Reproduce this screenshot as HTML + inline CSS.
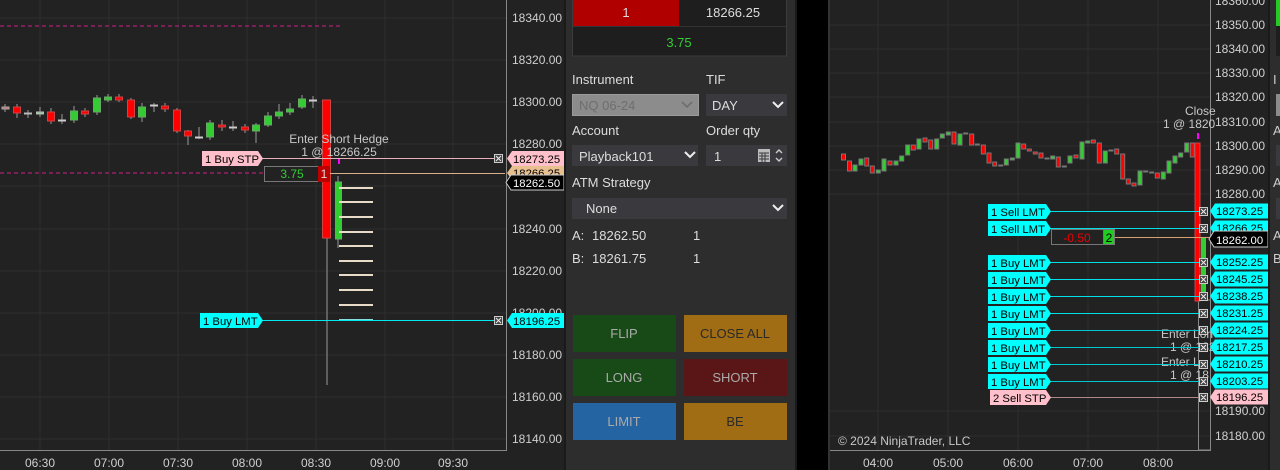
<!DOCTYPE html>
<html><head><meta charset="utf-8"><style>
html,body{margin:0;padding:0;background:#000;width:1280px;height:470px;overflow:hidden}
svg{display:block;font-family:"Liberation Sans",sans-serif}
.t{font-size:11.3px}
</style></head><body>
<svg width="1280" height="470" viewBox="0 0 1280 470" xmlns="http://www.w3.org/2000/svg">
<!-- LEFT CHART -->
<rect x="0" y="0" width="566" height="470" fill="#222"/>
<g stroke="#2e2e2e" stroke-width="1">
<line x1="0" y1="18" x2="506" y2="18"/><line x1="0" y1="60" x2="506" y2="60"/><line x1="0" y1="102" x2="506" y2="102"/><line x1="0" y1="144" x2="506" y2="144"/><line x1="0" y1="186" x2="506" y2="186"/><line x1="0" y1="229" x2="506" y2="229"/><line x1="0" y1="271" x2="506" y2="271"/><line x1="0" y1="313" x2="506" y2="313"/><line x1="0" y1="355" x2="506" y2="355"/><line x1="0" y1="397" x2="506" y2="397"/><line x1="0" y1="439" x2="506" y2="439"/>
<line x1="40" y1="0" x2="40" y2="450"/><line x1="109" y1="0" x2="109" y2="450"/><line x1="178" y1="0" x2="178" y2="450"/><line x1="247" y1="0" x2="247" y2="450"/><line x1="316" y1="0" x2="316" y2="450"/><line x1="385" y1="0" x2="385" y2="450"/><line x1="453" y1="0" x2="453" y2="450"/>
</g>
<line x1="0" y1="26" x2="343" y2="26" stroke="#d0208a" stroke-width="1" stroke-dasharray="4,3"/>
<line x1="0" y1="173" x2="265" y2="173" stroke="#d0208a" stroke-width="1" stroke-dasharray="4,3"/>
<line x1="506.5" y1="0" x2="506.5" y2="450" stroke="#888"/>
<line x1="0" y1="450.5" x2="507" y2="450.5" stroke="#888"/>
<g fill="#d0d0d0" font-size="12">
<text x="512" y="22">18340.00</text><text x="512" y="64">18320.00</text><text x="512" y="106">18300.00</text><text x="512" y="148">18280.00</text><text x="512" y="190">18260.00</text><text x="512" y="233">18240.00</text><text x="512" y="275">18220.00</text><text x="512" y="317">18200.00</text><text x="512" y="359">18180.00</text><text x="512" y="401">18160.00</text><text x="512" y="443">18140.00</text>
</g>
<g fill="#d0d0d0" font-size="12" text-anchor="middle">
<text x="40" y="467">06:30</text><text x="109" y="467">07:00</text><text x="178" y="467">07:30</text><text x="247" y="467">08:00</text><text x="316" y="467">08:30</text><text x="385" y="467">09:00</text><text x="453" y="467">09:30</text>
</g>
<g stroke="#999" stroke-width="1">
<line x1="5" y1="104" x2="5" y2="112"/><line x1="17" y1="104" x2="17" y2="118"/><line x1="28" y1="110" x2="28" y2="118"/><line x1="40" y1="107" x2="40" y2="117"/><line x1="51" y1="108" x2="51" y2="124"/><line x1="62" y1="114" x2="62" y2="124"/><line x1="74" y1="106" x2="74" y2="123"/><line x1="85" y1="108" x2="85" y2="117"/><line x1="97" y1="95" x2="97" y2="115"/><line x1="108" y1="94" x2="108" y2="102"/><line x1="119" y1="94" x2="119" y2="102"/><line x1="131" y1="98" x2="131" y2="119"/><line x1="142" y1="103" x2="142" y2="122"/><line x1="154" y1="103" x2="154" y2="112"/><line x1="165" y1="103" x2="165" y2="112"/><line x1="177" y1="108" x2="177" y2="133"/><line x1="188" y1="130" x2="188" y2="145"/><line x1="199" y1="127" x2="199" y2="139"/><line x1="210" y1="120" x2="210" y2="140"/><line x1="222" y1="120" x2="222" y2="131"/><line x1="233" y1="121" x2="233" y2="131"/><line x1="245" y1="124" x2="245" y2="133"/><line x1="256" y1="123" x2="256" y2="143"/><line x1="268" y1="112" x2="268" y2="127"/><line x1="279" y1="104" x2="279" y2="119"/><line x1="290" y1="103" x2="290" y2="115"/><line x1="302" y1="95" x2="302" y2="109"/><line x1="313" y1="96" x2="313" y2="108"/>
<line x1="327" y1="100" x2="327" y2="385"/><line x1="338" y1="176" x2="338" y2="248"/>
</g>
<g stroke-width="1">
<rect x="2" y="107" width="7" height="2" fill="#c66" stroke="#aaa"/>
<rect x="13.5" y="107" width="7" height="6" fill="#f00" stroke="#c44"/>
<rect x="24.5" y="113" width="7" height="1" fill="#aaa" stroke="#bbb"/>
<rect x="36.5" y="112" width="7" height="2" fill="#8c8" stroke="#bbb"/>
<rect x="47.5" y="112" width="7" height="9" fill="#f00" stroke="#c44"/>
<rect x="58.5" y="120" width="7" height="1" fill="#aaa" stroke="#ccc"/>
<rect x="70.5" y="111" width="7" height="9" fill="#33cc33" stroke="#6a6"/>
<rect x="81.5" y="111" width="7" height="3" fill="#f00" stroke="#c44"/>
<rect x="93.5" y="98" width="7" height="14" fill="#33cc33" stroke="#6a6"/>
<rect x="104.5" y="97" width="7" height="3" fill="#33cc33" stroke="#6a6"/>
<rect x="115.5" y="97" width="7" height="3" fill="#f00" stroke="#c44"/>
<rect x="127.5" y="100" width="7" height="17" fill="#f00" stroke="#c44"/>
<rect x="138.5" y="107" width="7" height="10" fill="#33cc33" stroke="#6a6"/>
<rect x="150.5" y="105" width="7" height="1" fill="#8c8" stroke="#ccc"/>
<rect x="161.5" y="106" width="7" height="3" fill="#f00" stroke="#c44"/>
<rect x="173.5" y="110" width="7" height="21" fill="#f00" stroke="#c44"/>
<rect x="184.5" y="131" width="7" height="5" fill="#f00" stroke="#c44"/>
<rect x="195.5" y="137" width="7" height="1" fill="#aaa" stroke="#ccc"/>
<rect x="206.5" y="123" width="7" height="14" fill="#33cc33" stroke="#6a6"/>
<rect x="218.5" y="125" width="7" height="2" fill="#f00" stroke="#c44"/>
<rect x="229.5" y="127" width="7" height="1" fill="#aaa" stroke="#ccc"/>
<rect x="241.5" y="127" width="7" height="3" fill="#f00" stroke="#c44"/>
<rect x="252.5" y="125" width="7" height="6" fill="#33cc33" stroke="#6a6"/>
<rect x="264.5" y="116" width="7" height="9" fill="#33cc33" stroke="#6a6"/>
<rect x="275.5" y="112" width="7" height="4" fill="#33cc33" stroke="#6a6"/>
<rect x="286.5" y="109" width="7" height="3" fill="#33cc33" stroke="#6a6"/>
<rect x="298.5" y="99" width="7" height="8" fill="#33cc33" stroke="#6a6"/>
<rect x="309.5" y="100" width="7" height="1" fill="#aaa" stroke="#ccc"/>
<rect x="322.5" y="100" width="8" height="138" fill="#f00" stroke="#c44"/>
<rect x="335.5" y="182" width="6" height="57" fill="#33cc33" stroke="#6a6"/>
</g>
<g stroke="#e8dcc8" stroke-width="2">
<line x1="339" y1="188" x2="373" y2="188"/><line x1="339" y1="202" x2="373" y2="202"/><line x1="339" y1="217" x2="373" y2="217"/><line x1="339" y1="232" x2="373" y2="232"/><line x1="339" y1="246" x2="373" y2="246"/><line x1="339" y1="261" x2="373" y2="261"/><line x1="339" y1="275" x2="373" y2="275"/><line x1="339" y1="290" x2="373" y2="290"/><line x1="339" y1="305" x2="373" y2="305"/>
</g>
<line x1="339" y1="320" x2="373" y2="320" stroke="#8dd" stroke-width="2"/>
<rect x="338" y="158" width="2" height="6" fill="#f0f"/>
<text x="339" y="143" fill="#c8c8c8" font-size="12" text-anchor="middle">Enter Short Hedge</text>
<text x="339" y="156" fill="#c8c8c8" font-size="12" text-anchor="middle">1 @ 18266.25</text>
<line x1="262" y1="158.5" x2="500" y2="158.5" stroke="#e8b0b8"/>
<line x1="330" y1="173.5" x2="505" y2="173.5" stroke="#d8b088"/>
<line x1="262" y1="320.5" x2="500" y2="320.5" stroke="#00e8f0"/>
<g class="t" fill="#000">
<polygon points="202,151 258,151 263,158.5 258,166 202,166" fill="#ffc0cb"/>
<text x="205" y="163">1 Buy STP</text>
<polygon points="200,313 258,313 263,320.5 258,328 200,328" fill="#00ffff"/>
<text x="203" y="325">1 Buy LMT</text>
</g>
<rect x="264.5" y="166.5" width="54" height="15" fill="#222" stroke="#777"/>
<text x="292" y="178" font-size="12" fill="#3c3" text-anchor="middle">3.75</text>
<rect x="318" y="166" width="12" height="16" fill="#b00"/>
<text x="324" y="178" font-size="12" fill="#ddd" text-anchor="middle">1</text>
<g stroke="#ccc" fill="#444"><rect x="494.5" y="154.5" width="8" height="8"/><rect x="494.5" y="316.5" width="8" height="8"/></g>
<g stroke="#eee"><path d="M496 156l5 5M501 156l-5 5M496 318l5 5M501 318l-5 5"/></g>
<g class="t" fill="#000">
<polygon points="507,158.5 512,151 564,151 564,166 512,166" fill="#ffc0cb"/>
<text x="513" y="163">18273.25</text>
<polygon points="507,173 512,166 564,166 564,180 512,180" fill="#e8c090"/>
<text x="513" y="177">18266.25</text>
<polygon points="506,182.5 511,175 564,175 564,190 511,190" fill="#000" stroke="#ccc"/>
<text x="513" y="187" fill="#fff">18262.50</text>
<polygon points="507,320.5 512,313 564,313 564,328 512,328" fill="#00ffff"/>
<text x="513" y="325">18196.25</text>
</g>

<!-- PANEL -->
<rect x="564" y="0" width="2" height="470" fill="#1a1a1a"/>
<rect x="566" y="0" width="229" height="470" fill="#2d2d2e"/>
<rect x="795" y="0" width="2" height="470" fill="#1a1a1a"/>
<rect x="797" y="0" width="31" height="470" fill="#000"/>
<rect x="572.5" y="-1" width="214" height="57" fill="#1e1e1e" stroke="#3c3c3c"/>
<rect x="573" y="0" width="106" height="26" fill="#b00000"/>
<line x1="573" y1="26.5" x2="786" y2="26.5" stroke="#333"/>
<g font-size="13" fill="#ddd">
<text x="626" y="17" text-anchor="middle">1</text>
<text x="733" y="17" text-anchor="middle">18266.25</text>
<text x="679" y="47" text-anchor="middle" fill="#3c3">3.75</text>
<text x="572" y="84">Instrument</text><text x="706" y="84">TIF</text>
<text x="572" y="135">Account</text><text x="706" y="135">Order qty</text>
<text x="572" y="187">ATM Strategy</text>
<text x="572" y="240">A:</text><text x="592" y="240">18262.50</text><text x="693" y="240">1</text>
<text x="572" y="263">B:</text><text x="592" y="263">18261.75</text><text x="693" y="263">1</text>
</g>
<rect x="572.5" y="94.5" width="126" height="21" fill="#8c8c8c" stroke="#9a9a9a"/>
<text x="579" y="110" font-size="13" fill="#6e6e6e">NQ 06-24</text>
<path d="M682 102l5 5 5-5" fill="none" stroke="#6e6e6e" stroke-width="1.6"/>
<rect x="706" y="94" width="81" height="22" fill="#3a3a3e"/>
<text x="712" y="110" font-size="13" fill="#ddd">DAY</text>
<path d="M773 102l5 5 5-5" fill="none" stroke="#eee" stroke-width="2"/>
<rect x="572" y="145" width="126" height="21" fill="#3a3a3e"/>
<text x="579" y="161" font-size="13" fill="#ddd">Playback101</text>
<path d="M685 152l5 5 5-5" fill="none" stroke="#eee" stroke-width="2"/>
<rect x="706" y="145" width="81" height="21" fill="#3a3a3e"/>
<text x="714" y="161" font-size="13" fill="#ddd">1</text>
<rect x="758" y="149" width="12" height="13" fill="#bbb"/>
<path d="M759 153h10M759 156h10M759 159h10M762 153v9M765 153v9" stroke="#3a3a3e" stroke-width="1"/>
<path d="M776 153l3-3 3 3M776 158l3 3 3-3" fill="none" stroke="#ccc" stroke-width="1.4"/>
<rect x="572" y="198" width="215" height="21" fill="#3a3a3e"/>
<text x="586" y="213" font-size="13" fill="#ddd">None</text>
<path d="M773 205l5 5 5-5" fill="none" stroke="#eee" stroke-width="2"/>
<rect x="573" y="315" width="103" height="37" fill="#184a18"/>
<rect x="684" y="315" width="103" height="37" fill="#a06c14"/>
<rect x="573" y="359" width="103" height="37" fill="#184a18"/>
<rect x="684" y="359" width="103" height="37" fill="#5a1616"/>
<rect x="573" y="403" width="103" height="37" fill="#2464a2"/>
<rect x="684" y="403" width="103" height="37" fill="#a06c14"/>
<g font-size="13" text-anchor="middle">
<text x="624" y="338" fill="#aaa">FLIP</text><text x="735" y="338" fill="#2a2a2a">CLOSE ALL</text>
<text x="624" y="382" fill="#aaa">LONG</text><text x="735" y="382" fill="#aaa">SHORT</text>
<text x="624" y="426" fill="#aaa">LIMIT</text><text x="735" y="426" fill="#2a2a2a">BE</text>
</g>

<!-- RIGHT CHART -->
<rect x="828" y="0" width="2" height="470" fill="#333"/>
<rect x="830" y="0" width="438" height="470" fill="#222"/>
<g stroke="#2e2e2e">
<line x1="830" y1="25" x2="1210" y2="25"/><line x1="830" y1="49" x2="1210" y2="49"/><line x1="830" y1="73" x2="1210" y2="73"/><line x1="830" y1="97" x2="1210" y2="97"/><line x1="830" y1="122" x2="1210" y2="122"/><line x1="830" y1="146" x2="1210" y2="146"/><line x1="830" y1="170" x2="1210" y2="170"/><line x1="830" y1="194" x2="1210" y2="194"/><line x1="830" y1="411" x2="1210" y2="411"/><line x1="830" y1="436" x2="1210" y2="436"/>
<line x1="878" y1="0" x2="878" y2="450"/><line x1="948" y1="0" x2="948" y2="450"/><line x1="1018" y1="0" x2="1018" y2="450"/><line x1="1088" y1="0" x2="1088" y2="450"/><line x1="1158" y1="0" x2="1158" y2="450"/>
</g>
<line x1="1210.5" y1="0" x2="1210.5" y2="450" stroke="#888"/>
<line x1="830" y1="450.5" x2="1211" y2="450.5" stroke="#888"/>
<g fill="#d0d0d0" font-size="12">
<text x="1215" y="5">18360.00</text><text x="1215" y="29">18350.00</text><text x="1215" y="53">18340.00</text><text x="1215" y="77">18330.00</text><text x="1215" y="101">18320.00</text><text x="1215" y="126">18310.00</text><text x="1215" y="150">18300.00</text><text x="1215" y="174">18290.00</text><text x="1215" y="198">18280.00</text><text x="1215" y="415">18190.00</text><text x="1215" y="440">18180.00</text>
</g>
<g fill="#d0d0d0" font-size="12" text-anchor="middle">
<text x="878" y="467">04:00</text><text x="948" y="467">05:00</text><text x="1018" y="467">06:00</text><text x="1088" y="467">07:00</text><text x="1158" y="467">08:00</text>
</g>
<text x="838" y="445" fill="#c8c8c8" font-size="12">© 2024 NinjaTrader, LLC</text>
<g stroke-width="1" stroke="#777">
<rect x="841.5" y="154" width="4" height="6" fill="#f00"/><rect x="847.5" y="161" width="4" height="10" fill="#f00"/><rect x="853" y="165" width="4" height="6" fill="#3c3"/><rect x="859" y="159" width="4" height="6" fill="#3c3"/><rect x="864.7" y="158" width="4" height="8" fill="#f00"/><rect x="870.3" y="166" width="4" height="7" fill="#f00"/><rect x="876.3" y="170" width="4" height="3" fill="#3c3"/><rect x="882" y="159" width="4" height="12" fill="#3c3"/><rect x="888" y="161" width="4" height="4" fill="#f00"/><rect x="894" y="161" width="4" height="4" fill="#3c3"/><rect x="899.7" y="156" width="4" height="5" fill="#3c3"/><rect x="905.7" y="145" width="4" height="10" fill="#3c3"/><rect x="911.3" y="145" width="4" height="5" fill="#f00"/><rect x="917" y="139" width="4" height="10" fill="#3c3"/><rect x="923" y="138" width="4" height="4" fill="#f00"/><rect x="928.7" y="140" width="4" height="9" fill="#f00"/><rect x="934.7" y="139" width="4" height="10" fill="#3c3"/><rect x="940.3" y="134" width="4" height="4" fill="#3c3"/><rect x="946.3" y="132" width="4" height="3" fill="#3c3"/><rect x="952" y="132" width="4" height="12" fill="#f00"/><rect x="958" y="134" width="4" height="11" fill="#3c3"/><rect x="963.7" y="133" width="4" height="1" fill="#aaa"/><rect x="969.7" y="134" width="4" height="11" fill="#f00"/><rect x="975.3" y="144" width="4" height="1" fill="#aaa"/><rect x="981.3" y="145" width="4" height="9" fill="#f00"/><rect x="987" y="153" width="4" height="10" fill="#f00"/><rect x="992.7" y="162" width="4" height="4" fill="#f00"/><rect x="998.7" y="165" width="4" height="1" fill="#aaa"/><rect x="1004.3" y="159" width="4" height="6" fill="#3c3"/><rect x="1010.3" y="158" width="4" height="2" fill="#3c3"/><rect x="1016" y="143" width="4" height="15" fill="#3c3"/><rect x="1021.7" y="144" width="4" height="5" fill="#f00"/><rect x="1027.3" y="149" width="4" height="2" fill="#f00"/><rect x="1033.3" y="152" width="4" height="2" fill="#f00"/><rect x="1039" y="153" width="4" height="5" fill="#f00"/><rect x="1045" y="158" width="4" height="1" fill="#aaa"/><rect x="1050.7" y="156" width="4" height="3" fill="#3c3"/><rect x="1056.3" y="157" width="4" height="10" fill="#f00"/><rect x="1062.3" y="166" width="4" height="1" fill="#aaa"/><rect x="1068" y="156" width="4" height="7" fill="#3c3"/><rect x="1074" y="155" width="4" height="3" fill="#f00"/><rect x="1080" y="142" width="4" height="17" fill="#3c3"/><rect x="1085.7" y="141" width="4" height="2" fill="#3c3"/><rect x="1091.3" y="140" width="4" height="3" fill="#f00"/><rect x="1097.3" y="143" width="4" height="20" fill="#f00"/><rect x="1103.3" y="151" width="4" height="12" fill="#3c3"/><rect x="1109" y="150" width="4" height="1" fill="#aaa"/><rect x="1114.7" y="149" width="4" height="5" fill="#f00"/><rect x="1120.7" y="154" width="4" height="25" fill="#f00"/><rect x="1126.3" y="179" width="4" height="5" fill="#f00"/><rect x="1132" y="183" width="4" height="3" fill="#f00"/><rect x="1138" y="171" width="4" height="14" fill="#3c3"/><rect x="1143.7" y="171" width="4" height="1" fill="#aaa"/><rect x="1149.7" y="172" width="4" height="1" fill="#aaa"/><rect x="1155.3" y="173" width="4" height="5" fill="#f00"/><rect x="1161.3" y="172" width="4" height="7" fill="#3c3"/><rect x="1167" y="161" width="4" height="12" fill="#3c3"/><rect x="1173" y="156" width="4" height="7" fill="#3c3"/><rect x="1178.7" y="153" width="4" height="4" fill="#3c3"/><rect x="1184.7" y="143" width="4" height="9" fill="#3c3"/><rect x="1190.3" y="143" width="4" height="14" fill="#f00"/>
</g>
<rect x="1198.5" y="300" width="12" height="150" fill="none" stroke="#888"/>
<rect x="1195" y="143" width="5" height="158" fill="#f00" stroke="#c44"/>
<rect x="1201" y="237" width="5" height="64" fill="#3c3"/>
<rect x="1197" y="133" width="2" height="6" fill="#f0f"/>
<g fill="#c8c8c8" font-size="12">
<text x="1185" y="115">Close</text><text x="1163" y="128">1 @ 1820</text>
<text x="1161" y="338">Enter Lon</text><text x="1170" y="351">1 @ 182</text>
<text x="1161" y="366">Enter L</text><text x="1170" y="379">1 @ 18</text>
</g>
<g stroke-width="1">
<line x1="1050" y1="211.5" x2="1204" y2="211.5" stroke="#00e0e8"/>
<line x1="1050" y1="228.5" x2="1204" y2="228.5" stroke="#00e0e8"/>
<line x1="1115" y1="237.5" x2="1210" y2="237.5" stroke="#d8a070"/>
<line x1="1050" y1="262.5" x2="1204" y2="262.5" stroke="#00e0e8"/>
<line x1="1050" y1="279.5" x2="1204" y2="279.5" stroke="#00e0e8"/>
<line x1="1050" y1="296.5" x2="1204" y2="296.5" stroke="#00e0e8"/>
<line x1="1050" y1="313.5" x2="1204" y2="313.5" stroke="#00e0e8"/>
<line x1="1050" y1="330.5" x2="1204" y2="330.5" stroke="#00c8d0"/>
<line x1="1050" y1="347.5" x2="1204" y2="347.5" stroke="#00c8d0"/>
<line x1="1050" y1="364.5" x2="1204" y2="364.5" stroke="#00c8d0"/>
<line x1="1050" y1="381.5" x2="1204" y2="381.5" stroke="#00c8d0"/>
<line x1="1050" y1="397.5" x2="1204" y2="397.5" stroke="#b08888"/>
</g>
<g class="t" fill="#000">
<polygon points="988,204 1046,204 1051,211.5 1046,219 988,219" fill="#00ffff"/><text x="991" y="216">1 Sell LMT</text>
<polygon points="988,221 1046,221 1051,228.5 1046,236 988,236" fill="#00ffff"/><text x="991" y="233">1 Sell LMT</text>
<polygon points="988,255 1046,255 1051,262.5 1046,270 988,270" fill="#00ffff"/><text x="991" y="267">1 Buy LMT</text>
<polygon points="988,272 1046,272 1051,279.5 1046,287 988,287" fill="#00ffff"/><text x="991" y="284">1 Buy LMT</text>
<polygon points="988,289 1046,289 1051,296.5 1046,304 988,304" fill="#00ffff"/><text x="991" y="301">1 Buy LMT</text>
<polygon points="988,306 1046,306 1051,313.5 1046,321 988,321" fill="#00ffff"/><text x="991" y="318">1 Buy LMT</text>
<polygon points="988,323 1046,323 1051,330.5 1046,338 988,338" fill="#00ffff"/><text x="991" y="335">1 Buy LMT</text>
<polygon points="988,340 1046,340 1051,347.5 1046,355 988,355" fill="#00ffff"/><text x="991" y="352">1 Buy LMT</text>
<polygon points="988,357 1046,357 1051,364.5 1046,372 988,372" fill="#00ffff"/><text x="991" y="369">1 Buy LMT</text>
<polygon points="988,374 1046,374 1051,381.5 1046,389 988,389" fill="#00ffff"/><text x="991" y="386">1 Buy LMT</text>
<polygon points="990,390 1046,390 1051,397.5 1046,405 990,405" fill="#ffc0cb"/><text x="993" y="402">2 Sell STP</text>
</g>
<rect x="1051.5" y="229.5" width="52" height="15" fill="#222" stroke="#777"/>
<text x="1077" y="242" font-size="12" fill="#e00" text-anchor="middle">-0.50</text>
<rect x="1103.5" y="229.5" width="11" height="15" fill="#2c2" stroke="#777"/>
<text x="1109" y="242" font-size="12" fill="#000" text-anchor="middle">2</text>
<g stroke="#ccc" fill="#444">
<rect x="1199.5" y="207.5" width="8" height="8"/><rect x="1199.5" y="224.5" width="8" height="8"/><rect x="1199.5" y="258.5" width="8" height="8"/><rect x="1199.5" y="275.5" width="8" height="8"/><rect x="1199.5" y="292.5" width="8" height="8"/><rect x="1199.5" y="309.5" width="8" height="8"/><rect x="1199.5" y="326.5" width="8" height="8"/><rect x="1199.5" y="343.5" width="8" height="8"/><rect x="1199.5" y="360.5" width="8" height="8"/><rect x="1199.5" y="377.5" width="8" height="8"/><rect x="1199.5" y="393.5" width="8" height="8"/>
</g>
<g stroke="#eee">
<path d="M1201 209l5 5M1206 209l-5 5M1201 226l5 5M1206 226l-5 5M1201 260l5 5M1206 260l-5 5M1201 277l5 5M1206 277l-5 5M1201 294l5 5M1206 294l-5 5M1201 311l5 5M1206 311l-5 5M1201 328l5 5M1206 328l-5 5M1201 345l5 5M1206 345l-5 5M1201 362l5 5M1206 362l-5 5M1201 379l5 5M1206 379l-5 5M1201 395l5 5M1206 395l-5 5"/>
</g>
<g class="t" fill="#000">
<polygon points="1210,211 1215,203.5 1268,203.5 1268,218.5 1215,218.5" fill="#00ffff"/><text x="1216" y="215">18273.25</text>
<polygon points="1210,228 1215,220.5 1268,220.5 1268,235.5 1215,235.5" fill="#00ffff"/><text x="1216" y="232">18266.25</text>
<polygon points="1209,239 1214,231 1268,231 1268,247 1214,247" fill="#000" stroke="#ccc"/><text x="1216" y="244" fill="#fff">18262.00</text>
<polygon points="1210,262 1215,254.5 1268,254.5 1268,269.5 1215,269.5" fill="#00ffff"/><text x="1216" y="266">18252.25</text>
<polygon points="1210,279 1215,271.5 1268,271.5 1268,286.5 1215,286.5" fill="#00ffff"/><text x="1216" y="283">18245.25</text>
<polygon points="1210,296 1215,288.5 1268,288.5 1268,303.5 1215,303.5" fill="#00ffff"/><text x="1216" y="300">18238.25</text>
<polygon points="1210,313 1215,305.5 1268,305.5 1268,320.5 1215,320.5" fill="#00ffff"/><text x="1216" y="317">18231.25</text>
<polygon points="1210,330 1215,322.5 1268,322.5 1268,337.5 1215,337.5" fill="#00ffff"/><text x="1216" y="334">18224.25</text>
<polygon points="1210,347 1215,339.5 1268,339.5 1268,354.5 1215,354.5" fill="#00ffff"/><text x="1216" y="351">18217.25</text>
<polygon points="1210,364 1215,356.5 1268,356.5 1268,371.5 1215,371.5" fill="#00ffff"/><text x="1216" y="368">18210.25</text>
<polygon points="1210,381 1215,373.5 1268,373.5 1268,388.5 1215,388.5" fill="#00ffff"/><text x="1216" y="385">18203.25</text>
<polygon points="1210,397 1215,389.5 1268,389.5 1268,404.5 1215,404.5" fill="#ffc0cb"/><text x="1216" y="401">18196.25</text>
</g>
<rect x="1268" y="0" width="12" height="470" fill="#2d2d2e"/>
<rect x="1268" y="0" width="2" height="470" fill="#1a1a1a"/>
<rect x="1276" y="0" width="4" height="26" fill="#2c2"/>
<rect x="1276" y="26" width="4" height="30" fill="#1e1e1e"/>
<rect x="1276" y="94" width="4" height="22" fill="#8c8c8c"/>
<rect x="1276" y="145" width="4" height="21" fill="#3a3a3e"/>
<rect x="1276" y="198" width="4" height="21" fill="#3a3a3e"/>
<g fill="#ccc" font-size="13"><text x="1273" y="84">I</text><text x="1273" y="135">A</text><text x="1273" y="187">A</text><text x="1273" y="240">A</text><text x="1273" y="263">B</text></g>
</svg>
</body></html>
